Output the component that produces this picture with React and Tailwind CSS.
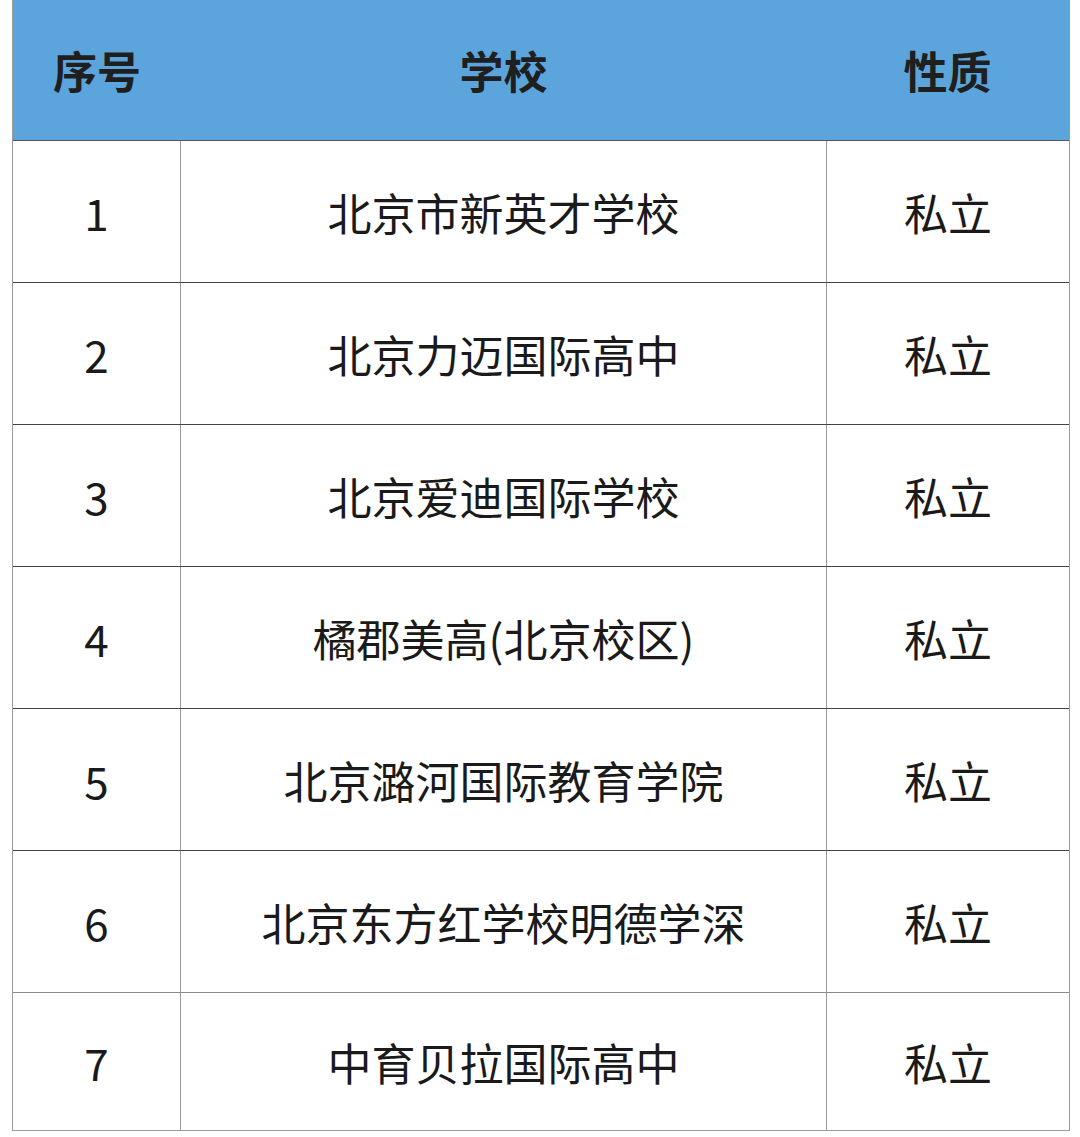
import React from "react";

const rows = [
  ["1", "北京市新英才学校"],
  ["2", "北京力迈国际高中"],
  ["3", "北京爱迪国际学校"],
  ["4", "橘郡美高(北京校区)"],
  ["5", "北京潞河国际教育学院"],
  ["6", "北京东方红学校明德学深"],
  ["7", "中育贝拉国际高中"],
];

const font = { fontFamily: '"Noto Sans CJK SC", "Noto Sans", sans-serif' };

export default function App() {
  return (
    <div className="w-[1080px] h-[1137px] bg-white" style={font}>
      <div className="ml-[12px] w-[1058px] border-l-[1.5px] border-r-[1.5px] border-[#9a9a9a]">
        <div className="flex h-[141px] bg-[#5ba4dc] border-b-[1.5px] border-[#555] text-[#1f1f1f] font-bold text-[44px]">
          <div className="w-[168px] flex items-center justify-center">序号</div>
          <div className="flex-1 flex items-center justify-center">学校</div>
          <div className="w-[243px] flex items-center justify-center">性质</div>
        </div>
        {rows.map(([n, name], i) => (
          <div
            key={n}
            className={
              i === rows.length - 1
                ? "flex h-[138px] border-b-[1.5px] border-[#9a9a9a] text-[#1a1a1a] text-[44px]"
                : i === 5
                ? "flex h-[142px] border-b-[1.5px] border-[#8a8a8a] text-[#1a1a1a] text-[44px]"
                : "flex h-[142px] border-b-[1.5px] border-[#444] text-[#1a1a1a] text-[44px]"
            }
          >
            <div className="w-[168px] flex items-center justify-center border-r-[1.5px] border-[#9a9a9a]">{n}</div>
            <div className="flex-1 flex items-center justify-center border-r-[1.5px] border-[#9a9a9a]">{name}</div>
            <div className="w-[242px] flex items-center justify-center">私立</div>
          </div>
        ))}
      </div>
    </div>
  );
}
